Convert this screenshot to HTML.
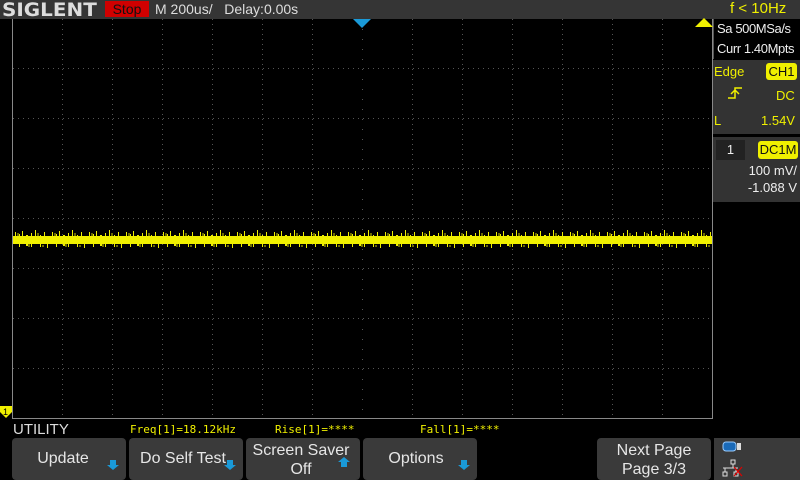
<!DOCTYPE html>
<html><head><style>
body{margin:0;width:800px;height:480px;background:#000;overflow:hidden;position:relative;font-family:"Liberation Sans",sans-serif}
div{position:absolute;box-sizing:border-box;white-space:nowrap}
.btn{top:438px;height:42px;background:#3a3a3a;border-radius:4px;color:#e6e6e6;font-size:16px;text-align:center}
.y{color:#f0f000}
</style></head><body>
<div style="left:0;top:0;width:800px;height:19px;background:#353535"></div>
<div style="left:2px;top:-1px;font-size:19px;font-weight:bold;color:#ddd;font-family:'DejaVu Sans',sans-serif;transform:scaleX(1.05);transform-origin:left">SIGLENT</div>
<div style="left:105px;top:1px;width:44px;height:16px;background:#d00000;color:#111;font-size:14px;line-height:16px;text-align:center">Stop</div>
<div style="left:155px;top:1px;color:#ddd;font-size:14px;line-height:16px;white-space:pre">M 200us/   Delay:0.00s</div>
<div style="left:730px;top:0;color:#f0f000;font-size:15px;line-height:18px">f &lt; 10Hz</div>
<svg style="position:absolute;left:0;top:0" width="800" height="480">
<defs>
<pattern id="nz" x="13" y="0" width="37" height="480" patternUnits="userSpaceOnUse">
<g fill="#f0f000">
<rect x="2" y="232" width="1" height="12"/><rect x="6" y="234" width="1" height="13"/><rect x="9" y="231" width="1" height="10"/><rect x="13" y="235" width="2" height="11"/><rect x="18" y="233" width="1" height="14"/><rect x="22" y="230" width="1" height="12"/><rect x="27" y="235" width="1" height="12"/><rect x="31" y="232" width="1" height="11"/><rect x="34" y="236" width="1" height="12"/>
</g>
<g fill="#6a6a00"><rect x="4" y="233" width="2" height="3"/><rect x="15" y="244" width="2" height="3"/><rect x="24" y="233" width="2" height="3"/><rect x="29" y="245" width="2" height="2"/></g>
</pattern>
</defs>
<g stroke="#555" stroke-width="1" stroke-dasharray="1 4">
<line x1="62.5" y1="19" x2="62.5" y2="418"/><line x1="112.5" y1="19" x2="112.5" y2="418"/><line x1="162.5" y1="19" x2="162.5" y2="418"/><line x1="212.5" y1="19" x2="212.5" y2="418"/><line x1="262.5" y1="19" x2="262.5" y2="418"/><line x1="312.5" y1="19" x2="312.5" y2="418"/><line x1="412.5" y1="19" x2="412.5" y2="418"/><line x1="462.5" y1="19" x2="462.5" y2="418"/><line x1="512.5" y1="19" x2="512.5" y2="418"/><line x1="562.5" y1="19" x2="562.5" y2="418"/><line x1="612.5" y1="19" x2="612.5" y2="418"/><line x1="662.5" y1="19" x2="662.5" y2="418"/>
<line x1="13" y1="68.5" x2="712" y2="68.5"/><line x1="13" y1="118.5" x2="712" y2="118.5"/><line x1="13" y1="168.5" x2="712" y2="168.5"/><line x1="13" y1="218.5" x2="712" y2="218.5"/><line x1="13" y1="268.5" x2="712" y2="268.5"/><line x1="13" y1="318.5" x2="712" y2="318.5"/><line x1="13" y1="368.5" x2="712" y2="368.5"/>
</g>
<g stroke="#555" stroke-width="1" stroke-dasharray="1 9">
<line x1="362.5" y1="19" x2="362.5" y2="418"/>
</g>
<path d="M12.5 19V418.5H712.5V19" fill="none" stroke="#888"/>
<rect x="13" y="236" width="699" height="8" fill="#f0f000"/>
<rect x="13" y="228" width="699" height="22" fill="url(#nz)"/>
<polygon points="353,19 371,19 362,28" fill="#1a9ad8"/>
<polygon points="695,27 713,27 704,18" fill="#f0f000"/>
<polygon points="0,406 12,406 12,412 6,418 0,412" fill="#f0f000"/>
<text x="3" y="415" font-size="9" font-family="Liberation Sans">1</text>
</svg>
<div style="left:713px;top:19px;width:87px;height:40px;background:#000;border-left:1px solid #555;color:#eee;font-size:13px;line-height:20px;padding-left:3px;letter-spacing:-0.4px">Sa 500MSa/s<br>Curr 1.40Mpts</div>
<div style="left:713px;top:60px;width:87px;height:74px;background:#333;color:#f0f000;font-size:13px">
<div style="left:1px;top:4px">Edge</div>
<div style="left:53px;top:3px;width:31px;height:17px;background:#f0f000;color:#111;border-radius:3px;text-align:center;line-height:17px">CH1</div>
<svg style="position:absolute;left:14px;top:26px" width="16" height="14"><path d="M1 12H8V2H15M4 8L8 4L12 8" stroke="#f0f000" fill="none" stroke-width="1.5"/></svg>
<div style="left:63px;top:28px">DC</div>
<div style="left:1px;top:53px">L</div>
<div style="left:48px;top:53px">1.54V</div>
</div>
<div style="left:713px;top:137px;width:87px;height:65px;background:#333;color:#eee;font-size:13px">
<div style="left:3px;top:3px;width:29px;height:20px;background:#222;text-align:center;line-height:20px">1</div>
<div style="left:45px;top:4px;width:40px;height:18px;background:#f0f000;color:#111;border-radius:3px;text-align:center;line-height:18px">DC1M</div>
<div style="right:3px;top:26px">100 mV/</div>
<div style="right:3px;top:43px">-1.088 V</div>
</div>
<div style="left:13px;top:421px;color:#ddd;font-size:15px">UTILITY</div>
<div class="y" style="left:130px;top:423px;font-size:11px;font-family:'DejaVu Sans Mono',monospace">Freq[1]=18.12kHz</div>
<div class="y" style="left:275px;top:423px;font-size:11px;font-family:'DejaVu Sans Mono',monospace">Rise[1]=****</div>
<div class="y" style="left:420px;top:423px;font-size:11px;font-family:'DejaVu Sans Mono',monospace">Fall[1]=****</div>
<div class="btn" style="left:12px;width:114px;line-height:42px;padding-right:12px">Update</div>
<div class="btn" style="left:129px;width:114px;line-height:42px;padding-right:6px">Do Self Test</div>
<div class="btn" style="left:246px;width:114px;line-height:19px;padding-top:3px;padding-right:4px">Screen Saver<br>Off</div>
<div class="btn" style="left:363px;width:114px;line-height:42px;padding-right:8px">Options</div>
<div class="btn" style="left:597px;width:114px;line-height:19px;padding-top:3px">Next Page<br>Page 3/3</div>
<div style="left:714px;top:438px;width:86px;height:42px;background:#3a3a3a"></div>
<svg style="position:absolute;left:0;top:0" width="800" height="480">
<g fill="#1a9ad8">
<path d="M110 460h6v5h3l-6 5-6-5h3z"/><path d="M227 460h6v5h3l-6 5-6-5h3z"/><path d="M344 457l6 5h-3v5h-6v-5h-3z"/><path d="M461 460h6v5h3l-6 5-6-5h3z"/>
</g>
<rect x="723" y="442" width="13" height="9" rx="3" fill="#1a6ab8" stroke="#9cf" stroke-width="1"/>
<rect x="737" y="443" width="4" height="7" fill="#ddd"/>
<g stroke="#ddd" fill="none"><rect x="731" y="460" width="4" height="4"/><path d="M733 464v4M723 468h15M725 468v4M736 468v4"/><rect x="723" y="472" width="4" height="4"/><rect x="734" y="472" width="4" height="4"/></g>
<path d="M734 467l8 9M742 467l-8 9" stroke="#d00" stroke-width="1.2"/>
</svg>
</body></html>
